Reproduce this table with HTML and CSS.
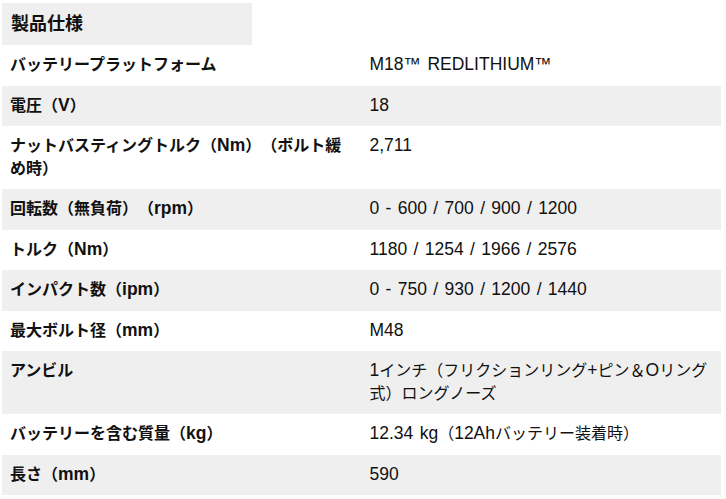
FILE: index.html
```html
<!DOCTYPE html>
<html lang="ja">
<head>
<meta charset="utf-8">
<link rel="stylesheet" href="styles.css">
</head>
<body>
<div class="page">
  <h2 class="title">製品仕様</h2>
  <table class="specs">
    <tr><th>バッテリープラットフォーム</th><td><span class="l">M18™ REDLITHIUM™</span></td></tr>
    <tr><th>電圧（<span class="l">V</span>）</th><td><span class="l">18</span></td></tr>
    <tr><th>ナットバスティングトルク（<span class="l">Nm</span>）（ボルト緩め時）</th><td><span class="l">2,711</span></td></tr>
    <tr><th>回転数（無負荷）（<span class="l">rpm</span>）</th><td><span class="l">0 - 600 / 700 / 900 / 1200</span></td></tr>
    <tr><th>トルク（<span class="l">Nm</span>）</th><td><span class="l">1180 / 1254 / 1966 / 2576</span></td></tr>
    <tr><th>インパクト数（<span class="l">ipm</span>）</th><td><span class="l">0 - 750 / 930 / 1200 / 1440</span></td></tr>
    <tr><th>最大ボルト径（<span class="l">mm</span>）</th><td><span class="l">M48</span></td></tr>
    <tr><th>アンビル</th><td><span class="l">1</span>インチ（フリクションリング<span class="l">+</span>ピン＆<span class="l">O</span>リング式）ロングノーズ</td></tr>
    <tr><th>バッテリーを含む質量（<span class="l">kg</span>）</th><td><span class="l">12.34 kg</span>（<span class="l">12Ah</span>バッテリー装着時）</td></tr>
    <tr><th>長さ（<span class="l">mm</span>）</th><td><span class="l">590</span></td></tr>
  </table>
</div>
</body>
</html>
```

FILE: styles.css
```css
html, body {
  margin: 0;
  padding: 0;
  background: #fff;
}
.page {
  display: flex;
  flex-direction: column;
  align-items: flex-start;
  padding: 3px 5px 0 2px;
  font-family: "Liberation Sans", "Noto Sans CJK JP", sans-serif;
  color: #111;
  text-spacing-trim: space-all;
}
.title {
  box-sizing: border-box;
  width: 250px;
  margin: 0;
  padding: 8px 9px;
  background: #efefef;
  font-size: 18px;
  line-height: 26px;
  font-weight: 700;
}
.specs {
  width: 719px;
  border-collapse: collapse;
  table-layout: fixed;
  font-size: 16px;
  line-height: 22.5px;
}
.specs th,
.specs td {
  width: 50%;
  padding: 9px 8px;
  text-align: left;
  vertical-align: top;
}
.specs th {
  font-weight: 700;
}
.specs td {
  font-weight: 400;
}
.specs tr:nth-child(even) {
  background: #efefef;
}
.l {
  font-size: 17.5px;
  line-height: 1;
  word-spacing: 1.5px;
}
```
